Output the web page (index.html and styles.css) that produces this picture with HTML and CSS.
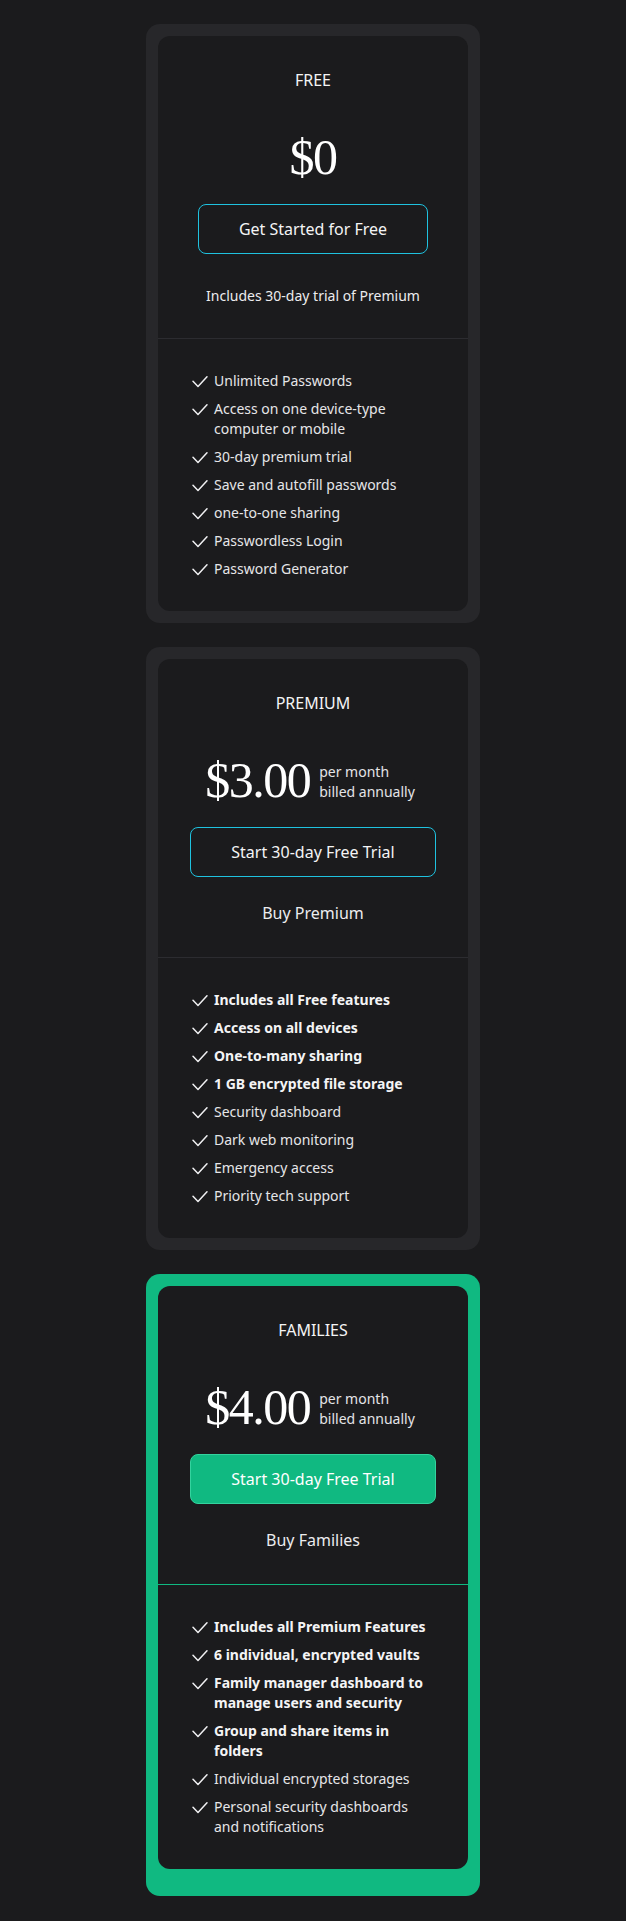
FILE: index.html
```html
<!DOCTYPE html>
<html lang="en">
<head>
<meta charset="utf-8">
<title>Pricing</title>
<link rel="stylesheet" href="styles.css">
</head>
<body>
<main class="plans">
  <section class="plan">
    <div class="plan-inner">
      <header class="plan-head">
        <h2 class="plan-name">FREE</h2>
        <div class="price-row"><span class="price">$0</span></div>
        <a class="btn btn-outline" href="#">Get Started for Free</a>
        <p class="note">Includes 30-day trial of Premium</p>
      </header>
      <ul class="features">
        <li><svg class="check" viewBox="0 0 20 20"><path d="M3 10.2 L8 15.4 L17 5.8"/></svg><span>Unlimited Passwords</span></li>
        <li><svg class="check" viewBox="0 0 20 20"><path d="M3 10.2 L8 15.4 L17 5.8"/></svg><span>Access on one device-type computer or mobile</span></li>
        <li><svg class="check" viewBox="0 0 20 20"><path d="M3 10.2 L8 15.4 L17 5.8"/></svg><span>30-day premium trial</span></li>
        <li><svg class="check" viewBox="0 0 20 20"><path d="M3 10.2 L8 15.4 L17 5.8"/></svg><span>Save and autofill passwords</span></li>
        <li><svg class="check" viewBox="0 0 20 20"><path d="M3 10.2 L8 15.4 L17 5.8"/></svg><span>one-to-one sharing</span></li>
        <li><svg class="check" viewBox="0 0 20 20"><path d="M3 10.2 L8 15.4 L17 5.8"/></svg><span>Passwordless Login</span></li>
        <li><svg class="check" viewBox="0 0 20 20"><path d="M3 10.2 L8 15.4 L17 5.8"/></svg><span>Password Generator</span></li>
      </ul>
    </div>
  </section>

  <section class="plan">
    <div class="plan-inner">
      <header class="plan-head">
        <h2 class="plan-name">PREMIUM</h2>
        <div class="price-row"><span class="price">$3.00</span><span class="per">per month<br>billed annually</span></div>
        <a class="btn btn-outline" href="#">Start 30-day Free Trial</a>
        <a class="buy" href="#">Buy Premium</a>
      </header>
      <ul class="features">
        <li class="strong"><svg class="check" viewBox="0 0 20 20"><path d="M3 10.2 L8 15.4 L17 5.8"/></svg><span>Includes all Free features</span></li>
        <li class="strong"><svg class="check" viewBox="0 0 20 20"><path d="M3 10.2 L8 15.4 L17 5.8"/></svg><span>Access on all devices</span></li>
        <li class="strong"><svg class="check" viewBox="0 0 20 20"><path d="M3 10.2 L8 15.4 L17 5.8"/></svg><span>One-to-many sharing</span></li>
        <li class="strong"><svg class="check" viewBox="0 0 20 20"><path d="M3 10.2 L8 15.4 L17 5.8"/></svg><span>1 GB encrypted file storage</span></li>
        <li><svg class="check" viewBox="0 0 20 20"><path d="M3 10.2 L8 15.4 L17 5.8"/></svg><span>Security dashboard</span></li>
        <li><svg class="check" viewBox="0 0 20 20"><path d="M3 10.2 L8 15.4 L17 5.8"/></svg><span>Dark web monitoring</span></li>
        <li><svg class="check" viewBox="0 0 20 20"><path d="M3 10.2 L8 15.4 L17 5.8"/></svg><span>Emergency access</span></li>
        <li><svg class="check" viewBox="0 0 20 20"><path d="M3 10.2 L8 15.4 L17 5.8"/></svg><span>Priority tech support</span></li>
      </ul>
    </div>
  </section>

  <section class="plan plan-featured">
    <div class="plan-inner">
      <header class="plan-head">
        <h2 class="plan-name">FAMILIES</h2>
        <div class="price-row"><span class="price">$4.00</span><span class="per">per month<br>billed annually</span></div>
        <a class="btn btn-solid" href="#">Start 30-day Free Trial</a>
        <a class="buy" href="#">Buy Families</a>
      </header>
      <ul class="features">
        <li class="strong"><svg class="check" viewBox="0 0 20 20"><path d="M3 10.2 L8 15.4 L17 5.8"/></svg><span>Includes all Premium Features</span></li>
        <li class="strong"><svg class="check" viewBox="0 0 20 20"><path d="M3 10.2 L8 15.4 L17 5.8"/></svg><span>6 individual, encrypted vaults</span></li>
        <li class="strong"><svg class="check" viewBox="0 0 20 20"><path d="M3 10.2 L8 15.4 L17 5.8"/></svg><span>Family manager dashboard to manage users and security</span></li>
        <li class="strong"><svg class="check" viewBox="0 0 20 20"><path d="M3 10.2 L8 15.4 L17 5.8"/></svg><span>Group and share items in folders</span></li>
        <li><svg class="check" viewBox="0 0 20 20"><path d="M3 10.2 L8 15.4 L17 5.8"/></svg><span>Individual encrypted storages</span></li>
        <li><svg class="check" viewBox="0 0 20 20"><path d="M3 10.2 L8 15.4 L17 5.8"/></svg><span>Personal security dashboards and notifications</span></li>
      </ul>
    </div>
  </section>
</main>
</body>
</html>
```

FILE: styles.css
```css
* { box-sizing: border-box; }

html, body {
  margin: 0;
  padding: 0;
  background: #1b1b1d;
}

body {
  font-family: "Noto Sans", "Open Sans", sans-serif;
  color: #f2f2f3;
}

.plans {
  width: 334px;
  margin: 0 auto;
  padding: 24px 0 25px;
  display: flex;
  flex-direction: column;
  gap: 24px;
}

.plan {
  background: #27272a;
  border-radius: 14px;
  padding: 12px;
}

.plan-featured {
  background: #10b981;
  padding-bottom: 27px;
}

.plan-inner {
  background: #1b1b1d;
  border-radius: 12px;
  overflow: hidden;
}

.plan-head {
  display: flex;
  flex-direction: column;
  align-items: center;
  padding: 32px 24px 32px;
  border-bottom: 1px solid #2c2c30;
  text-align: center;
}

.plan-featured .plan-head {
  border-bottom-color: #10b981;
}

.plan-name {
  margin: 0;
  font-size: 16px;
  line-height: 24px;
  font-weight: 400;
  color: #f4f4f5;
}

.price-row {
  margin-top: 40px;
  display: flex;
  align-items: last baseline;
  gap: 9px;
}

.price {
  font-family: "Liberation Serif", "Times New Roman", serif;
  font-size: 50px;
  line-height: 50px;
  letter-spacing: -1.5px;
  color: #ffffff;
}

.per {
  margin-right: 6px;
  font-size: 14px;
  line-height: 20px;
  text-align: left;
  color: #e4e4e7;
}

.btn {
  margin-top: 22px;
  display: block;
  padding: 12px 40px;
  font-size: 16px;
  line-height: 24px;
  color: #f4f4f5;
  text-decoration: none;
  border-radius: 8px;
}

.btn-outline {
  border: 1px solid #1fc2df;
}

.btn-solid {
  background: #10b981;
  border: 1px solid #34d39e;
  color: #ffffff;
}

.note {
  margin: 32px 0 0;
  font-size: 14px;
  line-height: 20px;
  color: #ececee;
}

.buy {
  margin-top: 24px;
  font-size: 16px;
  line-height: 24px;
  color: #ececee;
  text-decoration: none;
}

.features {
  list-style: none;
  margin: 0;
  padding: 32px 32px;
  display: flex;
  flex-direction: column;
  gap: 8px;
}

.features li {
  display: flex;
  align-items: flex-start;
  gap: 4px;
  font-size: 14px;
  line-height: 20px;
  color: #e6e6e8;
}

.features li.strong {
  font-weight: 700;
  color: #f4f4f5;
}

.check {
  flex: 0 0 20px;
  width: 20px;
  height: 20px;
}

.check path {
  fill: none;
  stroke: #f0f0f2;
  stroke-width: 1.5;
  stroke-linecap: round;
  stroke-linejoin: round;
}
```
